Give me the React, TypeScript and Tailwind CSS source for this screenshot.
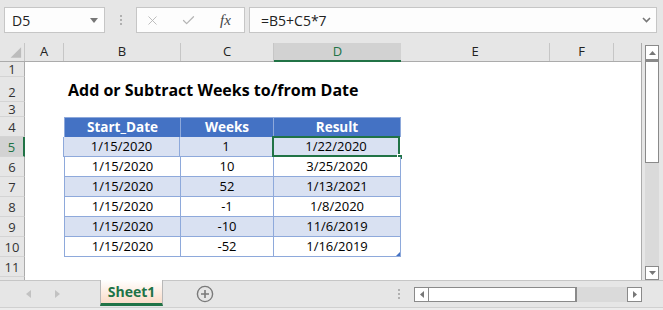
import { Check, X } from "lucide-react";

const colW = ["w-[25px]", "w-[39px]", "w-[117px]", "w-[93px]", "w-[127px]", "w-[149px]", "w-[64px]", "w-[27px]"];
const letters = ["", "A", "B", "C", "D", "E", "F", ""];

const data = [
  ["1/15/2020", "1", "1/22/2020"],
  ["1/15/2020", "10", "3/25/2020"],
  ["1/15/2020", "52", "1/13/2021"],
  ["1/15/2020", "-1", "1/8/2020"],
  ["1/15/2020", "-10", "11/6/2019"],
  ["1/15/2020", "-52", "1/16/2019"],
];

const RowHead = ({ n, h, active }: { n: string; h: string; active?: boolean }) => (
  <div
    className={`${h} w-[25px] shrink-0 flex items-center justify-center border-b border-[#d4d4d4] text-[13px] leading-[14px] ${
      n === "2" ? "items-end pb-[2px]" : ""
    } ${
      active ? "bg-[#d2d2d2] text-[#217346] border-r-2 border-r-[#217346]" : "bg-[#e6e6e6] text-[#333] border-r border-r-[#ababab]"
    }`}
  >
    {n}
  </div>
);

const App = () => {
  return (
    <div className="w-[663px] h-[310px] overflow-hidden bg-[#e6e6e6] flex flex-col font-['Open_Sans',sans-serif] text-black">
      {/* formula bar */}
      <div className="h-[43px] shrink-0 flex items-start pt-[7px] pl-[4px]">
        <div className="w-[101px] h-[26px] bg-[#fdfdfd] border border-[#c6c6c6] flex items-center justify-between pl-[7px] pr-[6px]">
          <span className="text-[14px] text-[#222]">D5</span>
          <svg width="8" height="5" viewBox="0 0 8 5">
            <path d="M0 0h8L4 5z" fill="#777" />
          </svg>
        </div>
        <div className="w-[31px] h-[26px] flex flex-col items-center justify-center gap-[2px]">
          <span className="w-[2px] h-[2px] bg-[#b0b0b0]" />
          <span className="w-[2px] h-[2px] bg-[#b0b0b0]" />
          <span className="w-[2px] h-[2px] bg-[#b0b0b0]" />
        </div>
        <div className="w-[109px] h-[26px] bg-[#fdfdfd] border border-[#c6c6c6] flex items-center pl-[8px] gap-[21px]">
          <X size={15} strokeWidth={1.4} color="#b5b5b5" />
          <Check size={15} strokeWidth={2} color="#b5b5b5" />
          <span className="font-['Liberation_Serif',serif] italic text-[15px] text-[#444] ml-[3px]">fx</span>
        </div>
        <div className="ml-[4px] w-[408px] h-[26px] bg-[#fdfdfd] border border-[#c6c6c6] flex items-center justify-between pl-[11px] pr-[5px]">
          <span className="text-[14px] text-[#222]">=B5+C5*7</span>
          <svg width="9" height="6" viewBox="0 0 9 6">
            <path d="M1 1l3.5 3.5L8 1" stroke="#777" strokeWidth="1.6" fill="none" />
          </svg>
        </div>
      </div>

      {/* sheet area */}
      <div className="h-[237px] shrink-0 flex">
        <div className="w-[642px] flex flex-col border-r border-[#ababab] bg-white">
          {/* column headers */}
          <div className="h-[19px] shrink-0 flex bg-[#e6e6e6] border-b border-[#ababab]">
            {letters.map((l, i) => (
              <div
                key={i}
                className={`${colW[i]} shrink-0 flex items-center justify-center text-[13px] ${
                  i === 4
                    ? "bg-[#d2d2d2] text-[#217346] border-b-2 border-[#217346] -mb-[1px]"
                    : i === 7
                    ? ""
                    : "text-[#222] border-r border-[#c6c6c6]"
                }`}
              >
                {i === 0 ? (
                  <svg width="25" height="18" viewBox="0 0 25 18" className="self-stretch">
                    <path d="M22 4v11H11z" fill="#bcbcbc" />
                  </svg>
                ) : (
                  l
                )}
              </div>
            ))}
          </div>

          {/* row 1 */}
          <div className="flex h-[15px] shrink-0">
            <RowHead n="1" h="h-[15px]" />
          </div>
          {/* row 2 */}
          <div className="flex h-[25px] shrink-0">
            <RowHead n="2" h="h-[25px]" />
            <div className="w-[39px]" />
            <div className="pl-[4px] whitespace-nowrap font-bold text-[16px] leading-[22px] self-end pb-[1px]">
              Add or Subtract Weeks to/from Date
            </div>
          </div>
          {/* row 3 */}
          <div className="flex h-[15px] shrink-0">
            <RowHead n="3" h="h-[15px]" />
          </div>
          {/* row 4 header */}
          <div className="flex h-[20px] shrink-0">
            <RowHead n="4" h="h-[20px]" />
            <div className="w-[39px]" />
            {["Start_Date", "Weeks", "Result"].map((t, i) => (
              <div
                key={t}
                className={`${colW[i + 2]} shrink-0 bg-[#4472c4] text-white font-bold text-[13.5px] flex items-end justify-center leading-[19px] border-[#8ea9db] border-t border-r ${
                  i === 0 ? "border-l" : ""
                }`}
              >
                {t}
              </div>
            ))}
          </div>
          {data.map((r, ri) => (
            <div key={ri} className="flex h-[20px] shrink-0">
              <RowHead n={String(ri + 5)} h="h-[20px]" active={ri === 0} />
              <div className={ri === 0 ? "w-[38px]" : "w-[39px]"} />
              {r.map((t, i) => (
                <div
                  key={i}
                  className={`${colW[i + 2]} shrink-0 relative text-[13px] flex items-end justify-center leading-[19px] border-[#8ea9db] border-b border-r ${
                    i === 0 ? "border-l" : ""
                  } ${ri % 2 === 0 ? "bg-[#d9e1f2]" : "bg-white"}`}
                >
                  {t}
                  {ri === 0 && i === 2 && (
                    <>
                      <div className="absolute -left-[1px] -top-[1px] -right-[1px] -bottom-[1px] border-2 border-[#217346]" />
                      <div className="absolute -right-[4px] -bottom-[4px] w-[6px] h-[6px] bg-[#217346] border border-white" />
                    </>
                  )}
                  {ri === 5 && i === 2 && (
                    <svg width="4" height="4" viewBox="0 0 4 4" className="absolute right-0 bottom-0">
                      <path d="M4 0v4H0z" fill="#4472c4" />
                    </svg>
                  )}
                </div>
              ))}
            </div>
          ))}
          {/* row 11 */}
          <div className="flex h-[20px] shrink-0">
            <RowHead n="11" h="h-[20px]" />
          </div>
          <div className="flex flex-1">
            <div className="w-[25px] bg-[#e6e6e6] border-r border-[#ababab]" />
          </div>
        </div>

        {/* vertical scrollbar */}
        <div className="w-[21px] flex flex-col pt-[2px] pl-[3px] pr-[4px]">
          <div className="h-[15px] shrink-0 bg-white border border-[#8a8a8a] flex items-center justify-center">
            <svg width="7" height="4" viewBox="0 0 7 4">
              <path d="M0 4h7L3.5 0z" fill="#777" />
            </svg>
          </div>
          <div className="h-[103px] shrink-0 bg-white border-x border-b border-[#8a8a8a] border-t-2" />
          <div className="flex-1 bg-[#dadada]" />
          <div className="h-[14px] shrink-0 bg-white border border-[#8a8a8a] flex items-center justify-center">
            <svg width="7" height="4" viewBox="0 0 7 4">
              <path d="M0 0h7L3.5 4z" fill="#777" />
            </svg>
          </div>
        </div>
      </div>

      {/* sheet tabs */}
      <div className="h-[30px] shrink-0 flex border-t border-[#c6c6c6] relative">
        <div className="w-[100px] flex items-center pl-[26px] gap-[24px] pb-[4px]">
          <svg width="5" height="8" viewBox="0 0 5 8">
            <path d="M5 0v8L0 4z" fill="#c2c2c2" />
          </svg>
          <svg width="5" height="8" viewBox="0 0 5 8">
            <path d="M0 0v8l5-4z" fill="#c2c2c2" />
          </svg>
        </div>
        <div className="w-[63px] h-[26px] -mt-[1px] bg-gradient-to-b from-white to-[#f9dcc8] border-x border-[#b8b8b8] border-b-[3px] border-b-[#217346] flex items-center justify-center">
          <span className="text-[#217346] font-bold text-[14px]">Sheet1</span>
        </div>
        <div className="w-[84px] flex items-center justify-center pb-[4px]">
          <svg width="18" height="18" viewBox="0 0 18 18">
            <circle cx="9" cy="9" r="7.6" stroke="#7a7a7a" strokeWidth="1.4" fill="none" />
            <path d="M9 5v8M5 9h8" stroke="#7a7a7a" strokeWidth="1.6" />
          </svg>
        </div>
        <div className="w-[167px] flex items-center justify-end pr-[14px] pb-[4px]">
          <div className="flex flex-col gap-[2px]">
            <span className="w-[2px] h-[2px] bg-[#b0b0b0]" />
            <span className="w-[2px] h-[2px] bg-[#b0b0b0]" />
            <span className="w-[2px] h-[2px] bg-[#b0b0b0]" />
          </div>
        </div>
        <div className="w-[228px] h-[15px] mt-[6px] flex">
          <div className="w-[15px] bg-white border border-[#8a8a8a] flex items-center justify-center">
            <svg width="4" height="7" viewBox="0 0 4 7">
              <path d="M4 0v7L0 3.5z" fill="#777" />
            </svg>
          </div>
          <div className="w-[148px] bg-white border-y border-r-2 border-[#8a8a8a]" />
          <div className="flex-1 bg-[#dadada]" />
          <div className="w-[15px] bg-white border border-[#8a8a8a] flex items-center justify-center">
            <svg width="4" height="7" viewBox="0 0 4 7">
              <path d="M0 0v7l4-3.5z" fill="#777" />
            </svg>
          </div>
        </div>
        <div className="absolute left-0 right-0 bottom-0 h-[3px] border-t border-[#d0d0d0] bg-[#ececec]" />
      </div>
    </div>
  );
};

export default App;
